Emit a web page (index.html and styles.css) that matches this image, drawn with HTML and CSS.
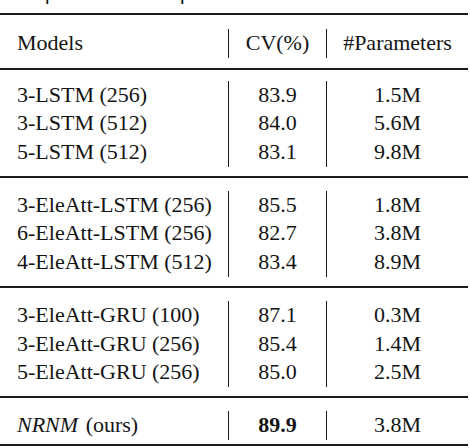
FILE: index.html
```html
<!DOCTYPE html>
<html>
<head>
<meta charset="utf-8">
<link rel="stylesheet" href="styles.css">
</head>
<body>
<div class="caption">Comparisons of the parameters and the CV results on NTU</div>
<div class="table">
  <div class="sec sec-head">
    <div class="cell c1">Models</div>
    <div class="cell c2">CV(%)</div>
    <div class="cell c3">#Parameters</div>
  </div>
  <div class="sec sec-first">
    <div class="cell c1">3-LSTM (256)</div><div class="cell c2">83.9</div><div class="cell c3">1.5M</div>
    <div class="cell c1">3-LSTM (512)</div><div class="cell c2">84.0</div><div class="cell c3">5.6M</div>
    <div class="cell c1">5-LSTM (512)</div><div class="cell c2">83.1</div><div class="cell c3">9.8M</div>
  </div>
  <div class="sec">
    <div class="cell c1">3-EleAtt-LSTM (256)</div><div class="cell c2">85.5</div><div class="cell c3">1.8M</div>
    <div class="cell c1">6-EleAtt-LSTM (256)</div><div class="cell c2">82.7</div><div class="cell c3">3.8M</div>
    <div class="cell c1">4-EleAtt-LSTM (512)</div><div class="cell c2">83.4</div><div class="cell c3">8.9M</div>
  </div>
  <div class="sec">
    <div class="cell c1">3-EleAtt-GRU (100)</div><div class="cell c2">87.1</div><div class="cell c3">0.3M</div>
    <div class="cell c1">3-EleAtt-GRU (256)</div><div class="cell c2">85.4</div><div class="cell c3">1.4M</div>
    <div class="cell c1">5-EleAtt-GRU (256)</div><div class="cell c2">85.0</div><div class="cell c3">2.5M</div>
  </div>
  <div class="sec sec-last">
    <div class="cell c1"><em>NRNM</em> (ours)</div><div class="cell c2"><strong>89.9</strong></div><div class="cell c3">3.8M</div>
  </div>
</div>
</body>
</html>
```

FILE: styles.css
```css
html, body {
  margin: 0;
  padding: 0;
  background: #ffffff;
}
body {
  font-family: "Liberation Serif", "Times New Roman", serif;
  font-size: 22px;
  color: #141414;
  width: 470px;
  overflow: hidden;
}
.caption {
  margin-top: -18px;
  height: 22px;
  line-height: 22px;
  padding-left: 2px;
  white-space: nowrap;
  overflow: hidden;
}
.table {
  margin-top: 9px;
  width: 468px;
  border-bottom: 2px solid #1c1c1c;
}
.sec {
  display: grid;
  grid-template-columns: 228px 98px 142px;
  border-top: 2px solid #1c1c1c;
  padding: 13px 0 9px;
}
.sec-head {
  padding: 14px 0 10px;
}
.sec-first {
  padding: 11px 0 9px;
}
.sec-last {
  padding: 13px 0 4px;
}
.cell {
  height: 28.7px;
  line-height: 28.7px;
  white-space: nowrap;
}
.c1 {
  padding-left: 17px;
}
.c2, .c3 {
  text-align: center;
  border-left: 1px solid #1c1c1c;
}
.c2 strong {
  font-weight: bold;
}
.c1 em {
  font-style: italic;
  margin-right: 2px;
}
```
